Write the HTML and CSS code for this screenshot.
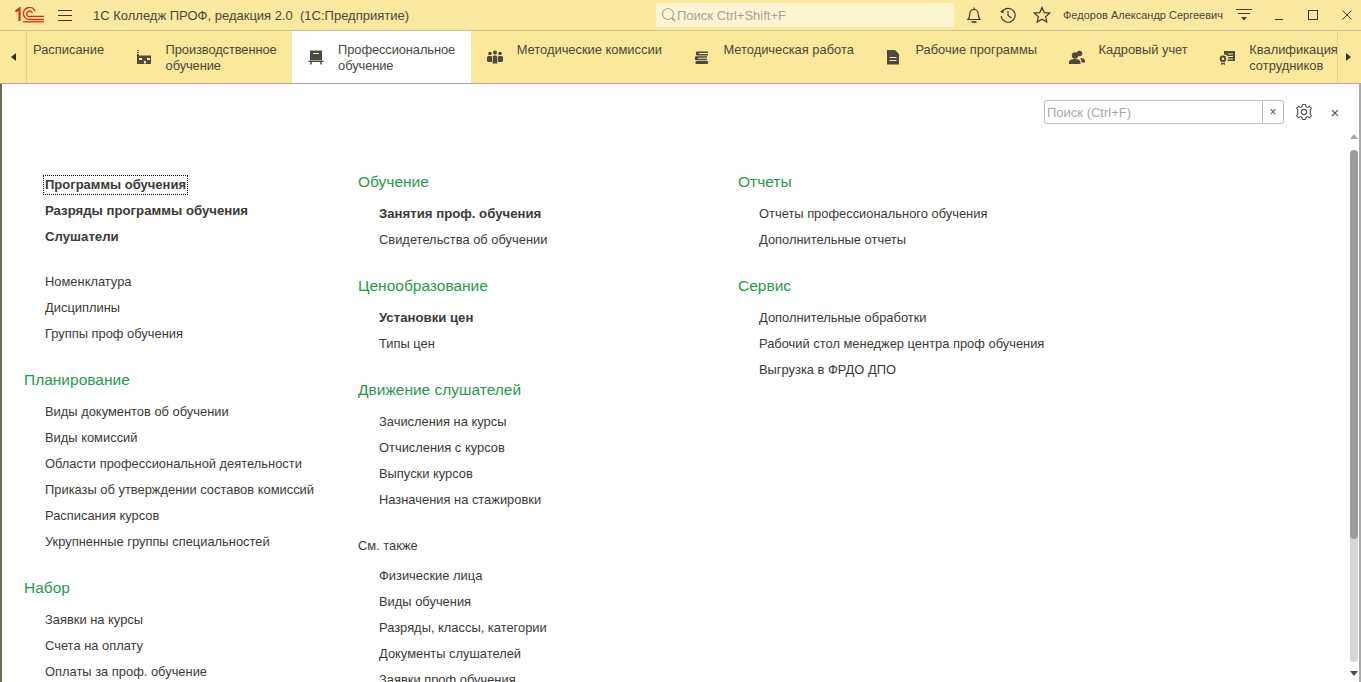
FILE: index.html
```html
<!DOCTYPE html>
<html lang="ru">
<head>
    <meta charset="UTF-8">
    <meta name="viewport" content="width=device-width, initial-scale=1.0">
    <title>1С Колледж ПРОФ</title>
    <link rel="stylesheet" href="styles.css">
</head>
<body>
    <header class="titlebar">
        <svg class="logo" width="30" height="16" viewBox="0 0 30 16" fill="none" stroke="#d0321e">
            <path d="M0.5 4.5 L4.5 1.5 V14" stroke-width="2.2"/>
            <path d="M20 4.2 A6 6 0 1 0 15 12.4 H29" stroke-width="1.5"/>
            <path d="M17.2 6 A2.8 2.8 0 1 0 15.5 9.4 H29" stroke-width="1.4"/>
            <path d="M8 14.8 H29" stroke-width="1.3"/>
        </svg>
        <div class="burger"><span></span><span></span><span></span></div>
        <div class="app-title">1С Колледж ПРОФ, редакция 2.0&nbsp; (1С:Предприятие)</div>
        <div class="global-search">
            <svg width="16" height="18" viewBox="0 0 16 18" fill="none" stroke="#a9a79c" stroke-width="1.2">
                <circle cx="7" cy="8" r="5.5"/>
                <path d="M11 12 L14 15" stroke-width="1.8"/>
            </svg>
            <span>Поиск Ctrl+Shift+F</span>
        </div>
        <div class="tools">
            <svg width="18" height="18" viewBox="0 0 18 18" fill="none" stroke="#3d3b30" stroke-width="1.2">
                <path d="M3 13.5 C5 11.5 4.5 9.5 4.8 7.5 C5.2 5 7 3.5 9 3.5 C11 3.5 12.8 5 13.2 7.5 C13.5 9.5 13 11.5 15 13.5 Z"/>
                <path d="M9 1.5 V3.5"/>
                <path d="M6.5 16 H11.5" stroke-width="1.6"/>
            </svg>
            <svg width="18" height="18" viewBox="0 0 18 18" fill="none" stroke="#3d3b30" stroke-width="1.2">
                <path d="M3.3 5.5 A7 7 0 1 1 2.2 10"/>
                <path d="M1 5.5 L4.5 3.5 L4.5 7.5 Z" fill="#3d3b30" stroke="none"/>
                <path d="M9 5 V9.5 L12.5 12"/>
            </svg>
            <svg width="18" height="18" viewBox="0 0 18 18" fill="none" stroke="#3d3b30" stroke-width="1.2">
                <path d="M9 1.5 L11.2 6.6 L16.7 7.1 L12.6 10.7 L13.8 16.1 L9 13.3 L4.2 16.1 L5.4 10.7 L1.3 7.1 L6.8 6.6 Z"/>
            </svg>
        </div>
        <div class="user-name">Федоров Александр Сергеевич</div>
        <svg class="user-menu" width="16" height="14" viewBox="0 0 16 14" stroke="#3d3b30" stroke-width="1">
            <path d="M0 1.5 H16 M2 5.5 H14"/>
            <path d="M5 9 H11 L8 12.5 Z" fill="#3d3b30" stroke="none"/>
        </svg>
        <div class="window-buttons">
            <svg width="10" height="12" viewBox="0 0 10 12" stroke="#3d3b30" stroke-width="1"><path d="M1 10.5 H9"/></svg>
            <svg width="10" height="12" viewBox="0 0 10 12" fill="none" stroke="#3d3b30" stroke-width="1"><rect x="0.5" y="1.5" width="9" height="9"/></svg>
            <svg width="10" height="12" viewBox="0 0 10 12" fill="none" stroke="#3d3b30" stroke-width="1"><path d="M0.5 1.5 L9.5 10.5 M9.5 1.5 L0.5 10.5"/></svg>
        </div>
    </header>

    <nav class="sections">
        <div class="scroll-btn scroll-left"><i class="arrow-left"></i></div>
        <div class="section-list">
            <a class="section no-icon"><span>Расписание</span></a>
            <a class="section section-tight">
                <svg viewBox="0 0 16 16"><path d="M1 1 H3 V2 H1 Z M1 3 H3 V4 H1 Z M1 5 H3 V6.5 H15 V15 H1 Z M3 9 V11 H6 V9 Z M8 12 V14.5 H10 V12 Z M11 9 V11 H14 V9 Z" fill-rule="evenodd"/></svg>
                <span>Производственное<br>обучение</span>
            </a>
            <a class="section section-tight active">
                <svg viewBox="0 0 16 16"><path d="M2 1.5 H14 V11 H2 Z M5 4 V5 H11 V4 Z M0.5 11.5 H15.5 V13 H13.5 L14 15.5 H12.5 L12 13 H4 L3.5 15.5 H2 L2.5 13 H0.5 Z" fill-rule="evenodd"/></svg>
                <span>Профессиональное<br>обучение</span>
            </a>
            <a class="section">
                <svg viewBox="0 0 16 16"><circle cx="3" cy="4.5" r="1.8"/><circle cx="8" cy="3.5" r="2"/><circle cx="13" cy="4.5" r="1.8"/><path d="M0 12 V8.5 C0 7.3 1 7 3 7 C4 7 4.6 7.2 5 7.5 V13 H1 Z M5.7 14.5 V8 C5.7 6.8 6.7 6.5 8 6.5 C9.3 6.5 10.3 6.8 10.3 8 V14.5 Z M11 7.5 C11.4 7.2 12 7 13 7 C15 7 16 7.3 16 8.5 V12 L15 13 H11 Z"/></svg>
                <span>Методические комиссии</span>
            </a>
            <a class="section">
                <svg viewBox="0 0 16 16"><path d="M4 2.5 H15 V4 H6 V5 H15 V6.5 H4 C2.5 6.5 2.5 2.5 4 2.5 Z M3 7.3 H14 V8.8 H5 V9.8 H14 V11.3 H3 C1.5 11.3 1.5 7.3 3 7.3 Z M3.5 12 H15 V15 H3.5 C2 15 2 12 3.5 12 Z" fill-rule="evenodd"/></svg>
                <span>Методическая работа</span>
            </a>
            <a class="section">
                <svg viewBox="0 0 16 16"><path d="M2 1 H10 L14 5 V15.5 H2 Z M4.5 8 V9 H11.5 V8 Z M4.5 11 V12 H11.5 V11 Z" fill-rule="evenodd"/></svg>
                <span>Рабочие программы</span>
            </a>
            <a class="section">
                <svg viewBox="0 0 16 16"><circle cx="10.5" cy="4.5" r="2.8"/><circle cx="6" cy="6.5" r="3.2"/><path d="M0 15 V13.5 C0 11 2.5 10 6 10 C9.5 10 11.5 11 11.5 13.5 V15 Z M11 9 C13.5 8.7 16 9.7 16 12 V13.5 H12.5 C12.5 11.5 12 10 11 9 Z"/></svg>
                <span>Кадровый учет</span>
            </a>
            <a class="section">
                <svg viewBox="0 0 16 16"><path d="M5 2 H16 V12 H8.5 A4 4 0 0 0 5 5.5 Z M9 4.5 V5.5 H14 V4.5 Z M9 7 V8 H14 V7 Z M9 9.5 V10.5 H14 V9.5 Z" fill-rule="evenodd"/><path d="M4 6.5 A3.3 3.3 0 1 1 4 13.1 A3.3 3.3 0 1 1 4 6.5 Z M4 8.5 A1.3 1.3 0 1 0 4 11.1 A1.3 1.3 0 1 0 4 8.5 Z M2 13.5 C3.2 14 4.8 14 6 13.5 V16 L4 15 L2 16 Z" fill-rule="evenodd"/></svg>
                <span>Квалификация<br>сотрудников</span>
            </a>
        </div>
        <div class="scroll-btn scroll-right"><i class="arrow-right"></i></div>
    </nav>

    <main class="content">
        <div class="content-tools">
            <div class="page-search">
                <span class="page-search-text">Поиск (Ctrl+F)</span>
                <span class="page-search-clear">×</span>
            </div>
            <svg class="gear" width="18" height="18" viewBox="0 0 18 18" fill="none" stroke="#55534a" stroke-width="1.1">
                <path d="M7.5 1.5 H10.5 L11 3.8 L12.6 4.5 L14.6 3.3 L16.5 5.5 L15 7.2 L15.4 9 L15 10.8 L16.5 12.5 L14.6 14.7 L12.6 13.5 L11 14.2 L10.5 16.5 H7.5 L7 14.2 L5.4 13.5 L3.4 14.7 L1.5 12.5 L3 10.8 L2.6 9 L3 7.2 L1.5 5.5 L3.4 3.3 L5.4 4.5 L7 3.8 Z"/>
                <circle cx="9" cy="9" r="2.6"/>
            </svg>
            <span class="page-close">×</span>
        </div>

        <div class="columns">
            <div class="column column-first">
                <div class="group">
                    <a class="link strong focused">Программы обучения</a>
                    <a class="link strong">Разряды программы обучения</a>
                    <a class="link strong">Слушатели</a>
                </div>
                <div class="group group-plain">
                    <a class="link">Номенклатура</a>
                    <a class="link">Дисциплины</a>
                    <a class="link">Группы проф обучения</a>
                </div>
                <div class="group">
                    <h2>Планирование</h2>
                    <a class="link">Виды документов об обучении</a>
                    <a class="link">Виды комиссий</a>
                    <a class="link">Области профессиональной деятельности</a>
                    <a class="link">Приказы об утверждении составов комиссий</a>
                    <a class="link">Расписания курсов</a>
                    <a class="link">Укрупненные группы специальностей</a>
                </div>
                <div class="group">
                    <h2>Набор</h2>
                    <a class="link">Заявки на курсы</a>
                    <a class="link">Счета на оплату</a>
                    <a class="link">Оплаты за проф. обучение</a>
                </div>
            </div>

            <div class="column column-second">
                <div class="group">
                    <h2>Обучение</h2>
                    <a class="link strong">Занятия проф. обучения</a>
                    <a class="link">Свидетельства об обучении</a>
                </div>
                <div class="group">
                    <h2>Ценообразование</h2>
                    <a class="link strong">Установки цен</a>
                    <a class="link">Типы цен</a>
                </div>
                <div class="group">
                    <h2>Движение слушателей</h2>
                    <a class="link">Зачисления на курсы</a>
                    <a class="link">Отчисления с курсов</a>
                    <a class="link">Выпуски курсов</a>
                    <a class="link">Назначения на стажировки</a>
                </div>
                <div class="group group-see">
                    <h3>См. также</h3>
                    <a class="link">Физические лица</a>
                    <a class="link">Виды обучения</a>
                    <a class="link">Разряды, классы, категории</a>
                    <a class="link">Документы слушателей</a>
                    <a class="link">Заявки проф обучения</a>
                </div>
            </div>

            <div class="column">
                <div class="group">
                    <h2>Отчеты</h2>
                    <a class="link">Отчеты профессионального обучения</a>
                    <a class="link">Дополнительные отчеты</a>
                </div>
                <div class="group">
                    <h2>Сервис</h2>
                    <a class="link">Дополнительные обработки</a>
                    <a class="link">Рабочий стол менеджер центра проф обучения</a>
                    <a class="link">Выгрузка в ФРДО ДПО</a>
                </div>
            </div>
        </div>

        <div class="scrollbar">
            <i class="scroll-up"></i>
            <div class="scroll-track"><div class="scroll-thumb"></div></div>
            <i class="scroll-down"></i>
        </div>
    </main>
</body>
</html>
```

FILE: styles.css
```css
* {
    margin: 0;
    padding: 0;
    box-sizing: border-box;
    font-family: 'Liberation Sans', Arial, sans-serif;
}

body {
    height: 682px;
    width: 1361px;
    overflow: hidden;
    background: #fff;
    display: flex;
    flex-direction: column;
    color: #3a3a36;
    font-size: 13px;
}

.titlebar {
    height: 31px;
    flex: none;
    display: flex;
    align-items: center;
    background: #fbe9a0;
    border-bottom: 1px solid #cfc48f;
    padding-left: 15px;
}

.logo {
    display: block;
    margin-bottom: 1px;
}

.burger {
    width: 14px;
    margin-left: 13px;
    display: flex;
    flex-direction: column;
    gap: 4px;
}

.burger span {
    display: block;
    height: 1px;
    background: #3d3b30;
}

.app-title {
    margin-left: 21px;
    width: 332px;
    font-size: 13px;
    color: #4a483c;
    white-space: nowrap;
}

.global-search {
    width: 298px;
    height: 24px;
    margin-left: 231px;
    background: #fdf5d2;
    display: flex;
    align-items: center;
    padding-left: 5px;
    color: #a5a498;
    font-size: 13px;
}

.tools {
    display: flex;
    gap: 16px;
    margin-left: 11px;
}

.tools svg {
    display: block;
}

.user-name {
    margin-left: 12px;
    width: 173px;
    font-size: 11px;
    color: #4a483c;
    white-space: nowrap;
}

.user-menu {
    display: block;
}

.window-buttons {
    display: flex;
    gap: 24px;
    margin-left: 22px;
}

.window-buttons svg {
    display: block;
}

.sections {
    height: 53px;
    flex: none;
    display: flex;
    background: #fbe89a;
    border-bottom: 1px solid #aeaa98;
}

.scroll-btn {
    flex: none;
    display: flex;
    align-items: center;
    justify-content: center;
    height: 52px;
}

.scroll-left {
    width: 27px;
    border-right: 1px solid #e0d293;
}

.scroll-right {
    width: 22px;
    margin-right: 2px;
    border-left: 1px solid #e0d293;
}

.arrow-left, .arrow-right, .scroll-up, .scroll-down {
    display: block;
    width: 0;
    height: 0;
    border-style: solid;
    border-color: transparent;
}

.arrow-left {
    border-width: 4px 5px 4px 0;
    border-right-color: #33322a;
}

.arrow-right {
    border-width: 4px 0 4px 5px;
    border-left-color: #33322a;
}

.section-list {
    flex: 1;
    display: flex;
    overflow: hidden;
}

.section {
    flex: none;
    display: flex;
    height: 52px;
    padding: 11px 15.75px 0;
    gap: 14px;
    line-height: 16px;
    font-size: 12.9px;
    color: #4a483c;
    white-space: nowrap;
}

.section svg {
    flex: none;
    width: 16px;
    height: 16px;
    margin-top: 7px;
    fill: #4b4a3e;
}

.section.no-icon {
    padding-left: 6px;
}

.section-tight {
    letter-spacing: -0.1px;
}

.section.active {
    background: #fff;
}

.content {
    flex: 1;
    position: relative;
    overflow: hidden;
    border-left: 2px solid #6e6a4e;
    border-right: 2px solid #a9a9a9;
}

.content-tools {
    display: flex;
    justify-content: flex-end;
    align-items: center;
    height: 24px;
    margin-top: 16px;
    padding-right: 19px;
}

.page-search {
    width: 240px;
    height: 24px;
    display: flex;
    border: 1px solid #bdbdb5;
    border-radius: 3px;
    line-height: 23px;
}

.page-search-text {
    flex: 1;
    padding-left: 2px;
    color: #a8a8a8;
    font-size: 13px;
    border-right: 1px solid #bdbdb5;
}

.page-search-clear {
    width: 20px;
    text-align: center;
    font-size: 12px;
    color: #55534a;
}

.gear {
    display: block;
    margin-left: 11px;
}

.page-close {
    width: 10px;
    margin-left: 17px;
    font-size: 15px;
    text-align: center;
    color: #55534a;
}

.columns {
    display: flex;
    margin-top: 46px;
    padding-left: 22px;
}

.column {
    flex: none;
}

.column-first {
    width: 334px;
    padding-top: 2px;
}

.column-second {
    width: 380px;
}

.group {
    margin-bottom: 21px;
}

.group-plain {
    margin-top: -2px;
}

.group-see {
    margin-top: -1px;
    margin-bottom: 0;
}

h2 {
    height: 26px;
    line-height: 24px;
    margin-bottom: 5px;
    font-size: 15.5px;
    font-weight: normal;
    color: #1f9a4d;
}

h3 {
    height: 26px;
    line-height: 26px;
    margin-bottom: 4px;
    font-size: 12.9px;
    font-weight: normal;
    color: #3a3a36;
}

.link {
    display: block;
    height: 26px;
    line-height: 26px;
    margin-left: 21px;
    font-size: 12.9px;
    color: #3a3a36;
    white-space: nowrap;
}

.strong {
    font-size: 13.2px;
    font-weight: bold;
}

.focused {
    width: max-content;
    position: relative;
    font-size: 13px;
}

.focused::after {
    content: '';
    position: absolute;
    left: -2px;
    right: -2px;
    top: 3px;
    bottom: 3px;
    border: 1px dotted #111;
}

.scrollbar {
    position: absolute;
    right: 1px;
    top: 50px;
    bottom: 6px;
    width: 8px;
    display: flex;
    flex-direction: column;
    align-items: center;
}

.scroll-up {
    border-width: 0 4px 5px;
    border-bottom-color: #a8a8a8;
    margin-bottom: 11px;
}

.scroll-track {
    flex: 1;
    width: 8px;
    background: #d6d6d6;
    border-radius: 4px;
    overflow: hidden;
}

.scroll-thumb {
    height: 76%;
    background: #9c9c9c;
    border-radius: 4px;
}

.scroll-down {
    border-width: 5px 4px 0;
    border-top-color: #4a4a4a;
    margin-top: 9px;
}
```
